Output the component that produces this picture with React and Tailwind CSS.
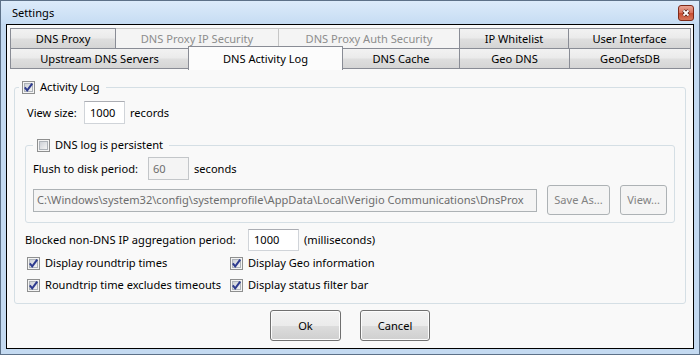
import React from "react";

const FONT = "font-['Segoe_UI','Noto_Sans',sans-serif] text-[11.1px] leading-[16px]";

const topTabs = [
  { label: "DNS Proxy", w: "w-[106px]" },
  { label: "DNS Proxy IP Security", w: "w-[164px]", disabled: true },
  { label: "DNS Proxy Auth Security", w: "w-[182px]", disabled: true },
  { label: "IP Whitelist", w: "w-[110px]" },
  { label: "User Interface", w: "w-[123px]" },
];

const bottomTabs = [
  { label: "Upstream DNS Servers", w: "w-[179px]" },
  { label: "DNS Activity Log", w: "w-[155px]", selected: true },
  { label: "DNS Cache", w: "w-[118px]" },
  { label: "Geo DNS", w: "w-[111px]" },
  { label: "GeoDefsDB", w: "w-[122px]" },
];

const tabFill = "bg-[linear-gradient(#f2f2f2,#ebebeb_45%,#dedede_55%,#d5d5d5)]";

function CheckBox({ checked }) {
  return (
    <svg width="13" height="13" viewBox="0 0 13 13" className="block shrink-0">
      <defs>
        <linearGradient id="cbFill" x1="0" y1="0" x2="1" y2="1">
          <stop offset="0" stopColor="#cbcfd5" />
          <stop offset="1" stopColor="#f6f6f6" />
        </linearGradient>
      </defs>
      <rect x="0.5" y="0.5" width="12" height="12" fill="#f4f4f4" stroke="#8e8f8f" />
      <rect x="2.5" y="2.5" width="8" height="8" fill="url(#cbFill)" stroke="#aeb3b9" />
      {checked && (
        <path d="M2.8 6.4 L5.2 9.4 L10.2 2.6" fill="none" stroke="#2e3b8f" strokeWidth="2" />
      )}
    </svg>
  );
}

function CheckLabel({ checked, children }) {
  return (
    <div className="flex items-center gap-[5px] h-[16px] whitespace-nowrap">
      <CheckBox checked={checked} />
      <span>{children}</span>
    </div>
  );
}

function CloseButton() {
  return (
    <svg width="16" height="16" viewBox="0 0 16 16" className="block">
      <defs>
        <linearGradient id="closeFill" x1="0" y1="0" x2="0" y2="1">
          <stop offset="0" stopColor="#eaa99a" />
          <stop offset="0.5" stopColor="#d8705a" />
          <stop offset="0.5" stopColor="#c74a2f" />
          <stop offset="1" stopColor="#d67a5f" />
        </linearGradient>
      </defs>
      <rect x="0.5" y="0.5" width="15" height="15" rx="2.5" fill="url(#closeFill)" stroke="#7e2a1a" />
      <path d="M5.5 5.5 L10.5 10.5 M10.5 5.5 L5.5 10.5" stroke="#4a1a12" strokeWidth="3.4" />
      <path d="M5.5 5.5 L10.5 10.5 M10.5 5.5 L5.5 10.5" stroke="#ffffff" strokeWidth="1.8" />
    </svg>
  );
}

function TabRows() {
  return (
    <div className="pt-[3px] pl-[3px] pr-[2px]">
      <div className="flex">
        {topTabs.map((t, i) => (
          <div
            key={t.label}
            className={[
              "flex items-center justify-center shrink-0 h-[20px] border border-b-0 whitespace-nowrap",
              t.w,
              i > 0 ? "-ml-px" : "",
              t.disabled
                ? "bg-[#f4f4f4] border-[#c6c6c6] text-[#8d8d8d]"
                : "relative border-[#898c95] " + tabFill,
            ].join(" ")}
          >
            {t.label}
          </div>
        ))}
      </div>
      <div className="flex">
        {bottomTabs.map((t, i) => (
          <div
            key={t.label}
            className={[
              "flex items-center justify-center shrink-0 border border-[#898c95] whitespace-nowrap",
              t.w,
              i > 0 ? "-ml-px" : "",
              t.selected
                ? "relative z-10 -top-[2px] h-[24px] border-b-0 bg-[#fcfcfc]"
                : "relative h-[21px] " + tabFill,
            ].join(" ")}
          >
            {t.label}
          </div>
        ))}
      </div>
    </div>
  );
}

function TextBox({ value, w, h, disabled }) {
  return (
    <div
      className={[
        "flex items-center shrink-0 border overflow-hidden whitespace-nowrap",
        w,
        h,
        disabled
          ? "bg-[#f4f4f4] border-[#c3c6c9] text-[#6d6d6d] pl-[4px]"
          : "bg-white border-[#d0d4d9] border-t-[#abadb3] pl-[5px]",
      ].join(" ")}
    >
      {value}
    </div>
  );
}

function DisabledButton({ w, children }) {
  return (
    <div
      className={
        "flex items-center justify-center shrink-0 h-[30px] rounded-[3px] border border-[#adb2b5] bg-[#f4f4f4] text-[#838383] " +
        w
      }
    >
      {children}
    </div>
  );
}

function DialogButton({ w, children }) {
  return (
    <div
      className={
        "flex items-center justify-center h-[31px] rounded-[3px] border border-[#707070] shadow-[inset_0_0_0_1px_#fcfcfc] bg-[linear-gradient(#f2f2f2,#ebebeb_50%,#dddddd_50%,#cfcfcf)] " +
        w
      }
    >
      {children}
    </div>
  );
}

export default function App() {
  return (
    <div className={"w-[700px] h-[355px] flex flex-col border border-[#5d7188] bg-[#c4daf1] text-black " + FONT}>
      <div className="h-[23px] shrink-0 flex items-center justify-between pl-[11px] pr-[5px] bg-[linear-gradient(#dcebfa,#c6dcf3)]">
        <span>Settings</span>
        <CloseButton />
      </div>

      <div className="flex-1 min-h-0 mx-[5px] mb-[5px] border border-black bg-[#f9f9f9] flex flex-col">
        <TabRows />

        <fieldset className="min-w-0 mt-[7px] mx-[7px] border border-[#d5dfe5] rounded-[3px] pl-[4px] pr-[10px] pb-[10px]">
          <legend className="pl-[3px] pr-[6px]">
            <CheckLabel checked>Activity Log</CheckLabel>
          </legend>

          <div className="pl-[6px] flex flex-col">
            <div className="mt-[6px] h-[23px] ml-[2px] flex items-center">
              <span className="w-[57px] shrink-0">View size:</span>
              <TextBox value="1000" w="w-[41px]" h="h-[23px]" />
              <span className="ml-[5px]">records</span>
            </div>

            <fieldset className="min-w-0 mt-[13px] border border-[#d5dfe5] rounded-[3px] pl-[7px] pr-[7px] pb-[7px]">
              <legend className="pl-[4px] pr-[6px]">
                <CheckLabel>DNS log is persistent</CheckLabel>
              </legend>
              <div className="mt-[4px] h-[23px] flex items-center">
                <span className="w-[115px] shrink-0">Flush to disk period:</span>
                <TextBox value="60" w="w-[41px]" h="h-[23px]" disabled />
                <span className="ml-[5px]">seconds</span>
              </div>
              <div className="mt-[5px] h-[30px] flex items-center gap-[10px]">
                <div className="flex-1 min-w-0 h-[23px] flex items-center border border-[#adb2b5] bg-[#f4f4f4] text-[#6d6d6d] pl-[3px] overflow-hidden whitespace-nowrap">
                  C:\Windows\system32\config\systemprofile\AppData\Local\Verigio Communications\DnsProx
                </div>
                <DisabledButton w="w-[63px]">Save As...</DisabledButton>
                <DisabledButton w="w-[47px]">View...</DisabledButton>
              </div>
            </fieldset>

            <div className="mt-[6px] h-[22px] flex items-center whitespace-nowrap">
              <span className="w-[223px] shrink-0">Blocked non-DNS IP aggregation period:</span>
              <TextBox value="1000" w="w-[51px]" h="h-[22px]" />
              <span className="ml-[5px]">(milliseconds)</span>
            </div>

            <div className="mt-[4px] ml-[2px] grid grid-cols-[203px_1fr] gap-y-[6px]">
              <CheckLabel checked>Display roundtrip times</CheckLabel>
              <CheckLabel checked>Display Geo information</CheckLabel>
              <CheckLabel checked>Roundtrip time excludes timeouts</CheckLabel>
              <CheckLabel checked>Display status filter bar</CheckLabel>
            </div>
          </div>
        </fieldset>

        <div className="mt-[6px] flex justify-center gap-[19px]">
          <DialogButton w="w-[71px]">Ok</DialogButton>
          <DialogButton w="w-[70px]">Cancel</DialogButton>
        </div>
      </div>
    </div>
  );
}
